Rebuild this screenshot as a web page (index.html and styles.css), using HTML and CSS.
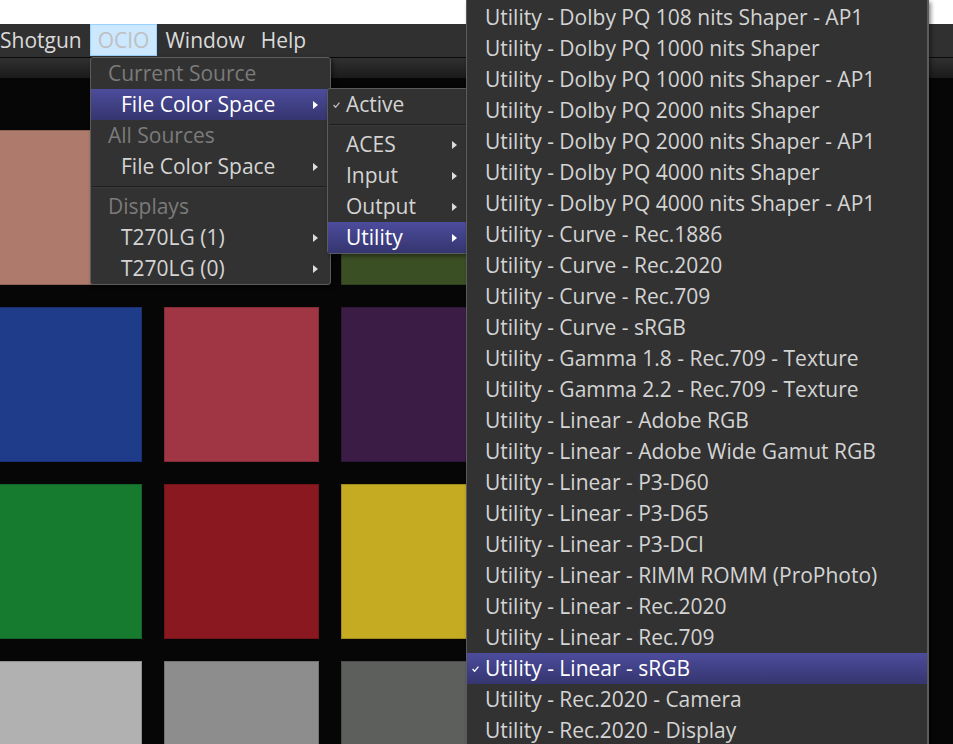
FILE: index.html
```html
<!DOCTYPE html>
<html>
<head>
<meta charset="utf-8">
<link rel="stylesheet" href="styles.css">
</head>
<body>
<div class="app">
  <div class="topstrip"></div>
  <div class="menubar">
    <span class="mb-item">Shotgun</span>
    <span class="mb-item active">OCIO</span>
    <span class="mb-item">Window</span>
    <span class="mb-item">Help</span>
  </div>
  <div class="toolbar"></div>
  <div class="viewer">
    <div class="chart">
      <div class="sw c-brown"></div>
      <div class="sw c-skin"></div>
      <div class="sw c-olive"></div>
      <div class="sw c-blue"></div>
      <div class="sw c-pink"></div>
      <div class="sw c-purple"></div>
      <div class="sw c-green"></div>
      <div class="sw c-red"></div>
      <div class="sw c-yellow"></div>
      <div class="sw c-g1"></div>
      <div class="sw c-g2"></div>
      <div class="sw c-g3"></div>
    </div>
  </div>

  <div class="menu m1">
    <div class="row hdr">Current Source</div>
    <div class="row item sel"><span class="lbl">File Color Space</span><span class="arrow"></span></div>
    <div class="row hdr">All Sources</div>
    <div class="row item"><span class="lbl">File Color Space</span><span class="arrow"></span></div>
    <div class="sep"></div>
    <div class="row hdr">Displays</div>
    <div class="row item"><span class="lbl">T270LG (1)</span><span class="arrow"></span></div>
    <div class="row item"><span class="lbl">T270LG (0)</span><span class="arrow"></span></div>
  </div>

  <div class="menu m2">
    <div class="row citem"><span class="chk"><svg width="7" height="6" viewBox="0 0 7 6"><polyline points="0.6,3 2.6,5.3 6.4,0.6" fill="none" stroke="#bdbdbd" stroke-width="1.3"/></svg></span><span class="lbl">Active</span></div>
    <div class="sep"></div>
    <div class="row citem"><span class="chk"></span><span class="lbl">ACES</span><span class="arrow"></span></div>
    <div class="row citem"><span class="chk"></span><span class="lbl">Input</span><span class="arrow"></span></div>
    <div class="row citem"><span class="chk"></span><span class="lbl">Output</span><span class="arrow"></span></div>
    <div class="row citem sel"><span class="chk"></span><span class="lbl">Utility</span><span class="arrow"></span></div>
  </div>

  <div class="menu m3">
    <div class="row citem"><span class="chk"></span><span class="lbl">Utility - Dolby PQ 108 nits Shaper - AP1</span></div>
    <div class="row citem"><span class="chk"></span><span class="lbl">Utility - Dolby PQ 1000 nits Shaper</span></div>
    <div class="row citem"><span class="chk"></span><span class="lbl">Utility - Dolby PQ 1000 nits Shaper - AP1</span></div>
    <div class="row citem"><span class="chk"></span><span class="lbl">Utility - Dolby PQ 2000 nits Shaper</span></div>
    <div class="row citem"><span class="chk"></span><span class="lbl">Utility - Dolby PQ 2000 nits Shaper - AP1</span></div>
    <div class="row citem"><span class="chk"></span><span class="lbl">Utility - Dolby PQ 4000 nits Shaper</span></div>
    <div class="row citem"><span class="chk"></span><span class="lbl">Utility - Dolby PQ 4000 nits Shaper - AP1</span></div>
    <div class="row citem"><span class="chk"></span><span class="lbl">Utility - Curve - Rec.1886</span></div>
    <div class="row citem"><span class="chk"></span><span class="lbl">Utility - Curve - Rec.2020</span></div>
    <div class="row citem"><span class="chk"></span><span class="lbl">Utility - Curve - Rec.709</span></div>
    <div class="row citem"><span class="chk"></span><span class="lbl">Utility - Curve - sRGB</span></div>
    <div class="row citem"><span class="chk"></span><span class="lbl">Utility - Gamma 1.8 - Rec.709 - Texture</span></div>
    <div class="row citem"><span class="chk"></span><span class="lbl">Utility - Gamma 2.2 - Rec.709 - Texture</span></div>
    <div class="row citem"><span class="chk"></span><span class="lbl">Utility - Linear - Adobe RGB</span></div>
    <div class="row citem"><span class="chk"></span><span class="lbl">Utility - Linear - Adobe Wide Gamut RGB</span></div>
    <div class="row citem"><span class="chk"></span><span class="lbl">Utility - Linear - P3-D60</span></div>
    <div class="row citem"><span class="chk"></span><span class="lbl">Utility - Linear - P3-D65</span></div>
    <div class="row citem"><span class="chk"></span><span class="lbl">Utility - Linear - P3-DCI</span></div>
    <div class="row citem"><span class="chk"></span><span class="lbl">Utility - Linear - RIMM ROMM (ProPhoto)</span></div>
    <div class="row citem"><span class="chk"></span><span class="lbl">Utility - Linear - Rec.2020</span></div>
    <div class="row citem"><span class="chk"></span><span class="lbl">Utility - Linear - Rec.709</span></div>
    <div class="row citem sel"><span class="chk"><svg width="7" height="6" viewBox="0 0 7 6"><polyline points="0.6,3 2.6,5.3 6.4,0.6" fill="none" stroke="#ffffff" stroke-width="1.3"/></svg></span><span class="lbl">Utility - Linear - sRGB</span></div>
    <div class="row citem"><span class="chk"></span><span class="lbl">Utility - Rec.2020 - Camera</span></div>
    <div class="row citem"><span class="chk"></span><span class="lbl">Utility - Rec.2020 - Display</span></div>
  </div>
</div>
</body>
</html>
```

FILE: styles.css
```css
* { box-sizing: border-box; }
html, body { margin: 0; padding: 0; }
body {
  width: 953px;
  height: 744px;
  overflow: hidden;
  background: #000;
  font-family: "Open Sans", "Noto Sans", sans-serif;
  font-size: 21px;
}
.app {
  position: relative;
  width: 953px;
  height: 744px;
  overflow: hidden;
  display: flex;
  flex-direction: column;
}
.topstrip { height: 24px; background: #fff; flex: none; }
.menubar {
  flex: none;
  height: 34px;
  background: #303030;
  border-bottom: 1px solid #0a0a0a;
  display: flex;
  align-items: flex-start;
  margin-left: -8px;
}
.mb-item {
  height: 32px;
  display: flex;
  align-items: center;
  padding: 0 7px;
  color: #dadada;
  border: 1px solid transparent;
  line-height: 1;
}
.mb-item.active {
  background: #cce8ff;
  border-color: #99d1ff;
  color: #bfbfbf;
}
.toolbar {
  flex: none;
  height: 20px;
  background: linear-gradient(#303030, #1b1b1b);
}
.viewer {
  flex: 1;
  background: #060606;
  padding-top: 52px;
  overflow: hidden;
}
.chart {
  display: grid;
  grid-template-columns: repeat(3, 155px);
  grid-auto-rows: 155px;
  gap: 22px;
  margin-left: -13px;
}
.sw { box-shadow: inset 0 0 0 1px rgba(0,0,0,0.18); }
.c-brown { background: #ae7a6b; }
.c-skin { background: #d49a85; }
.c-olive { background: #3b4f24; }
.c-blue { background: #1f3c8b; }
.c-pink { background: #a03644; }
.c-purple { background: #3a1c45; }
.c-green { background: #167a2f; }
.c-red { background: #891820; }
.c-yellow { background: #c5ab22; }
.c-g1 { background: #b0b1b0; }
.c-g2 { background: #8c8d8c; }
.c-g3 { background: #5d5f5d; }

.menu {
  position: absolute;
  background: #323232;
  border: 1px solid #5c5c5c;
  border-radius: 3px;
  box-shadow: 2px 2px 4px rgba(0,0,0,0.45);
  color: #d4d4d4;
  display: flex;
  flex-direction: column;
}
.m1 { left: 90px; top: 57px; width: 241px; }
.m2 { left: 327px; top: 88px; width: 143px; }
.m3 {
  left: 466px;
  top: 0;
  width: 463px;
  border-width: 0 2px 0 1px;
  border-radius: 0;
  padding-top: 2px;
}

.row {
  height: 31px;
  flex: none;
  display: flex;
  align-items: center;
  white-space: nowrap;
  line-height: 1;
  padding-right: 12px;
}
.row .lbl { flex: 1; }
.hdr { color: #7b7b7b; padding-left: 17px; }
.m1 .item { padding-left: 30px; }
.citem { padding-left: 5px; }
.chk {
  width: 13px;
  flex: none;
  display: flex;
  align-items: center;
}
.chk svg { display: block; }
.sel {
  background: linear-gradient(#4c4c9d, #35356f);
  color: #fff;
}
.arrow {
  flex: none;
  width: 0;
  height: 0;
  border-left: 5px solid #dcdcdc;
  border-top: 4px solid transparent;
  border-bottom: 4px solid transparent;
}
.sel .arrow { border-left-color: #fff; }
.sep {
  flex: none;
  height: 9px;
  padding-top: 4px;
}
.sep::before {
  content: "";
  display: block;
  height: 1px;
  margin: 0 1px;
  background: #1e1e1e;
  box-shadow: 0 1px 0 #3a3a3a;
}
```
